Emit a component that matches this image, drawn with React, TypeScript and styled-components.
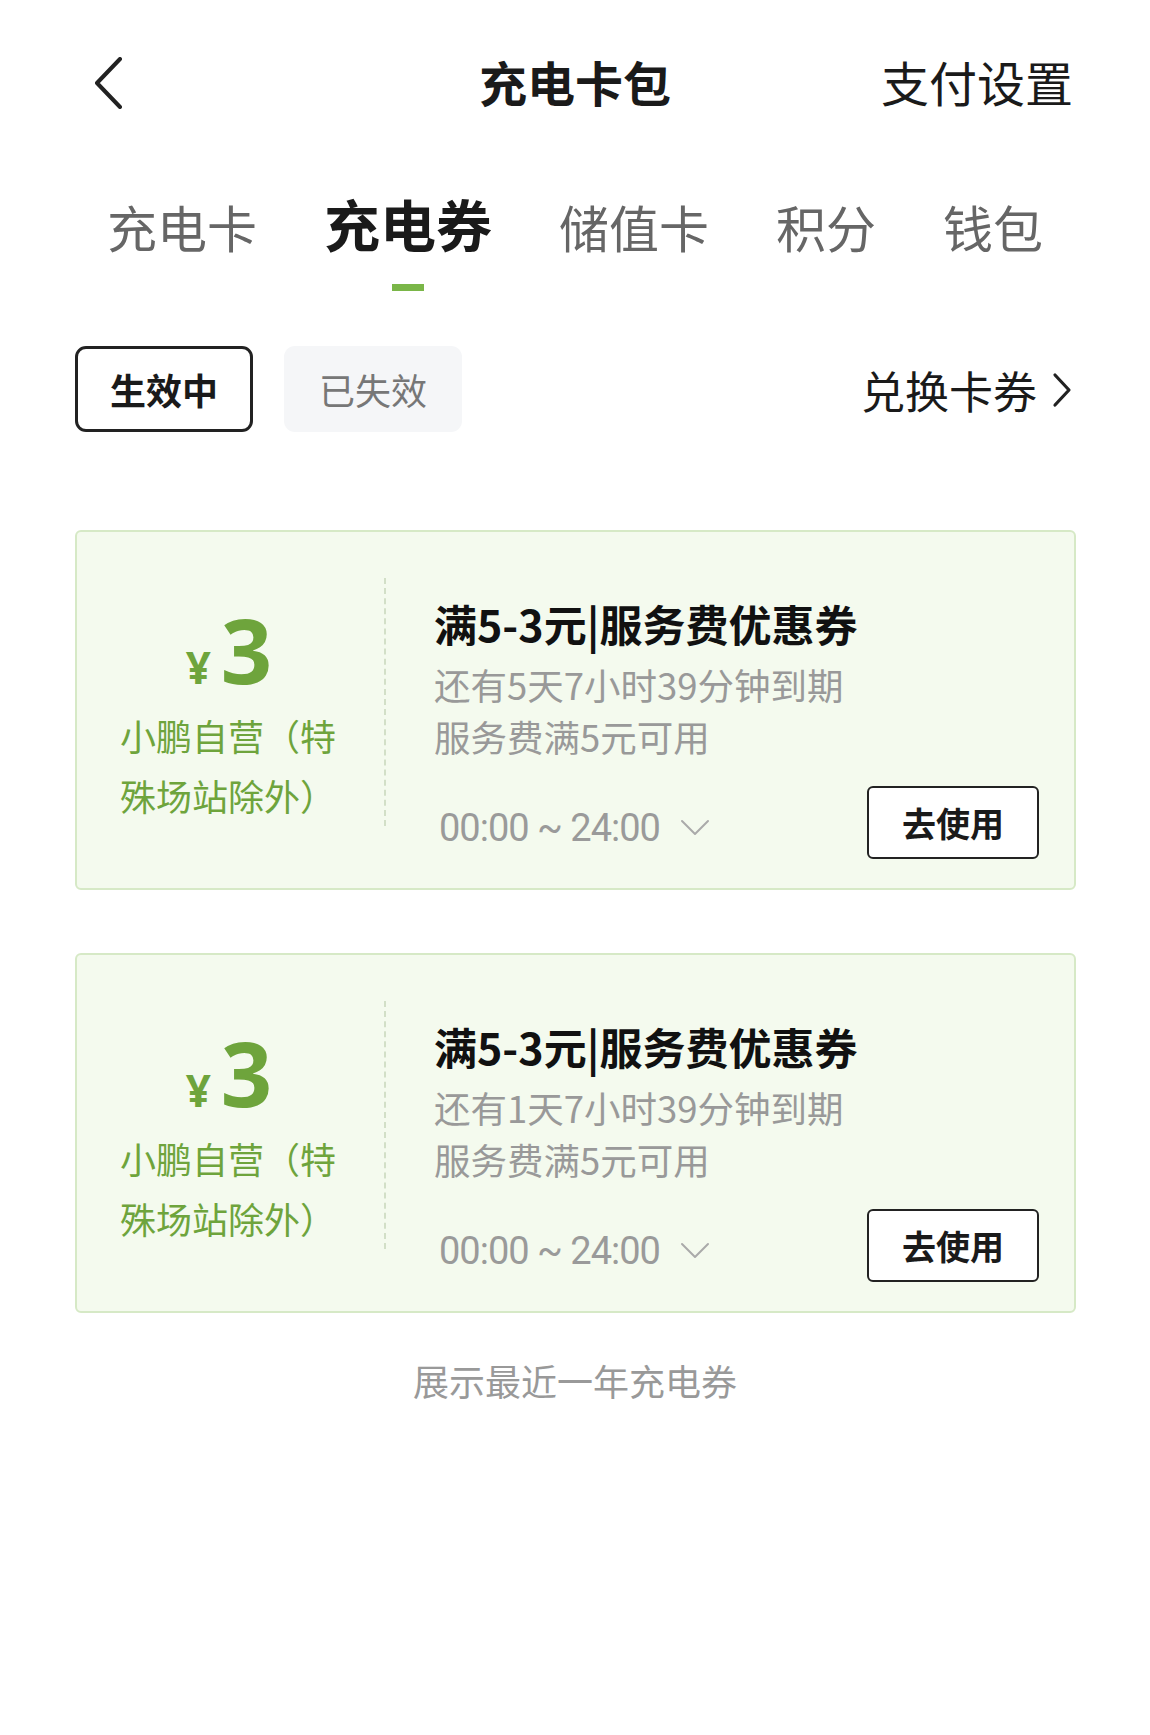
import React from "react";
import styled, { createGlobalStyle } from "styled-components";

const GREEN = "#6ea43c";

interface Coupon {
  id: number;
  amount: string;
  scope: string;
  title: string;
  expire: string;
  rule: string;
  time: string;
}

const coupons: Coupon[] = [
  {
    id: 1,
    amount: "3",
    scope: "小鹏自营（特殊场站除外）",
    title: "满5-3元|服务费优惠券",
    expire: "还有5天7小时39分钟到期",
    rule: "服务费满5元可用",
    time: "00:00 ~ 24:00",
  },
  {
    id: 2,
    amount: "3",
    scope: "小鹏自营（特殊场站除外）",
    title: "满5-3元|服务费优惠券",
    expire: "还有1天7小时39分钟到期",
    rule: "服务费满5元可用",
    time: "00:00 ~ 24:00",
  },
];

const tabs = ["充电卡", "充电券", "储值卡", "积分", "钱包"];

function App() {
  return (
    <Page>
      <GlobalStyle />
      <Header>
        <BackBtn>
          <svg width="32" height="52" viewBox="0 0 32 52" fill="none">
            <path d="M28 2 L5 26 L28 50" stroke="#222" strokeWidth="4" strokeLinecap="round" strokeLinejoin="round" />
          </svg>
        </BackBtn>
        <Title>充电卡包</Title>
        <HeaderAction>支付设置</HeaderAction>
      </Header>

      <Tabs>
        {tabs.map((t, i) => (
          <Tab key={t} $active={i === 1}>
            <TabLabel $active={i === 1}>{t}</TabLabel>
            <Indicator $active={i === 1} />
          </Tab>
        ))}
      </Tabs>

      <FilterRow>
        <Chip $active>生效中</Chip>
        <Chip>已失效</Chip>
        <Exchange>
          兑换卡券
          <svg width="22" height="36" viewBox="0 0 22 36" fill="none">
            <path d="M4 3 L18 18 L4 33" stroke="#222" strokeWidth="3.2" strokeLinecap="round" strokeLinejoin="round" />
          </svg>
        </Exchange>
      </FilterRow>

      <CardList>
        {coupons.map((c) => (
          <Card key={c.id}>
            <Left>
              <Amount>
                <Yen>¥</Yen>
                <Num>{c.amount}</Num>
              </Amount>
              <Scope>{c.scope}</Scope>
            </Left>
            <Divider />
            <Right>
              <CardTitle>{c.title}</CardTitle>
              <SubText>{c.expire}</SubText>
              <SubText>{c.rule}</SubText>
              <BottomRow>
                <TimeText>
                  {c.time}
                  <svg width="30" height="18" viewBox="0 0 30 18" fill="none">
                    <path d="M2 2 L15 15 L28 2" stroke="#aaa" strokeWidth="2" strokeLinecap="round" strokeLinejoin="round" />
                  </svg>
                </TimeText>
                <UseBtn>去使用</UseBtn>
              </BottomRow>
            </Right>
          </Card>
        ))}
      </CardList>

      <Footer>展示最近一年充电券</Footer>
    </Page>
  );
}

export default App;

const GlobalStyle = createGlobalStyle`
  body {
    margin: 0;
    background: #fff;
    font-family: "Noto Sans CJK SC", "Noto Sans", sans-serif;
  }
`;

const Page = styled.div`
  width: 1150px;
  min-height: 1735px;
  background: #fff;
  color: #1a1a1a;
`;

const Header = styled.header`
  height: 166px;
  display: grid;
  grid-template-columns: 1fr auto 1fr;
  align-items: center;
  padding: 0 77px;
`;

const BackBtn = styled.div`
  display: flex;
  align-items: center;
  margin-left: 15px;
`;

const Title = styled.h1`
  margin: 0 0 4px;
  font-size: 48px;
  font-weight: 700;
  line-height: 60px;
  color: #1a1a1a;
`;

const HeaderAction = styled.div`
  justify-self: end;
  margin-bottom: 4px;
  font-size: 48px;
  line-height: 60px;
  color: #1a1a1a;
`;

const Tabs = styled.nav`
  display: flex;
  align-items: flex-start;
  gap: 67px;
  padding: 24px 0 0 107px;
  height: 132px;
`;

const Tab = styled.div<{ $active?: boolean }>`
  display: flex;
  flex-direction: column;
  align-items: center;
  padding-top: ${(p) => (p.$active ? "0px" : "3px")};
`;

const TabLabel = styled.span<{ $active?: boolean }>`
  font-size: ${(p) => (p.$active ? "56px" : "50px")};
  font-weight: ${(p) => (p.$active ? 700 : 400)};
  color: ${(p) => (p.$active ? "#1a1a1a" : "#666")};
  line-height: 66px;
`;

const Indicator = styled.i<{ $active?: boolean }>`
  display: block;
  width: 32px;
  height: 7px;
  margin-top: 28px;
  background: ${(p) => (p.$active ? "#7ab648" : "transparent")};
`;

const FilterRow = styled.div`
  display: flex;
  align-items: center;
  gap: 31px;
  padding: 0 77px 0 75px;
  height: 86px;
  margin-top: 24px;
`;

const Chip = styled.div<{ $active?: boolean }>`
  box-sizing: border-box;
  width: 178px;
  height: 86px;
  display: flex;
  align-items: center;
  justify-content: center;
  border-radius: 11px;
  font-size: 36px;
  font-weight: ${(p) => (p.$active ? 700 : 400)};
  color: ${(p) => (p.$active ? "#1a1a1a" : "#777")};
  border: ${(p) => (p.$active ? "3px solid #222" : "none")};
  background: ${(p) => (p.$active ? "#fff" : "#f5f6f8")};
`;

const Exchange = styled.div`
  margin-left: auto;
  display: flex;
  align-items: center;
  gap: 14px;
  font-size: 44px;
  color: #1a1a1a;
  padding-top: 2px;
`;

const CardList = styled.div`
  display: flex;
  flex-direction: column;
  gap: 63px;
  padding: 0 74px 0 75px;
  margin-top: 98px;
`;

const Card = styled.div`
  box-sizing: border-box;
  height: 360px;
  display: flex;
  border: 2px solid #d6e9c6;
  border-radius: 6px;
  background: #f4faee;
`;

const Left = styled.div`
  width: 224px;
  padding-left: 43px;
  margin-right: 40px;
  display: flex;
  flex-direction: column;
  justify-content: center;
  padding-top: 14px;
`;

const Amount = styled.div`
  display: flex;
  align-items: baseline;
  justify-content: center;
  gap: 10px;
  color: ${GREEN};
  font-family: "Noto Sans", "Noto Sans CJK SC", sans-serif;
  font-weight: 700;
  height: 96px;
  margin-right: 6px;
`;

const Yen = styled.span`
  font-size: 44px;
  line-height: 1;
`;

const Num = styled.span`
  font-size: 90px;
  line-height: 80px;
`;

const Scope = styled.div`
  font-size: 36px;
  line-height: 60px;
  color: ${GREEN};
`;

const Divider = styled.div`
  align-self: flex-start;
  margin-top: 46px;
  height: 248px;
  border-left: 2px dashed #d2dfc7;
`;

const Right = styled.div`
  flex: 1;
  display: flex;
  flex-direction: column;
  padding: 66px 35px 0 48px;
`;

const CardTitle = styled.div`
  font-size: 43px;
  font-weight: 700;
  line-height: 50px;
  color: #111;
  margin-bottom: 11px;
`;

const SubText = styled.div`
  font-size: 36.5px;
  line-height: 52px;
  color: #999;
`;

const BottomRow = styled.div`
  display: flex;
  align-items: center;
  justify-content: space-between;
  margin-top: 23px;
`;

const TimeText = styled.div`
  display: flex;
  align-items: center;
  gap: 20px;
  padding-left: 5px;
  padding-top: 10px;
  font-family: Roboto, "Noto Sans", sans-serif;
  font-size: 38px;
  letter-spacing: -1px;
  color: #9a9a9a;
`;

const UseBtn = styled.div`
  box-sizing: border-box;
  width: 172px;
  height: 73px;
  display: flex;
  align-items: center;
  justify-content: center;
  border: 2px solid #222;
  border-radius: 6px;
  background: #fff;
  font-size: 34px;
  font-weight: 700;
  color: #1a1a1a;
`;

const Footer = styled.div`
  margin-top: 42px;
  text-align: center;
  font-size: 36px;
  line-height: 50px;
  color: #999;
`;
